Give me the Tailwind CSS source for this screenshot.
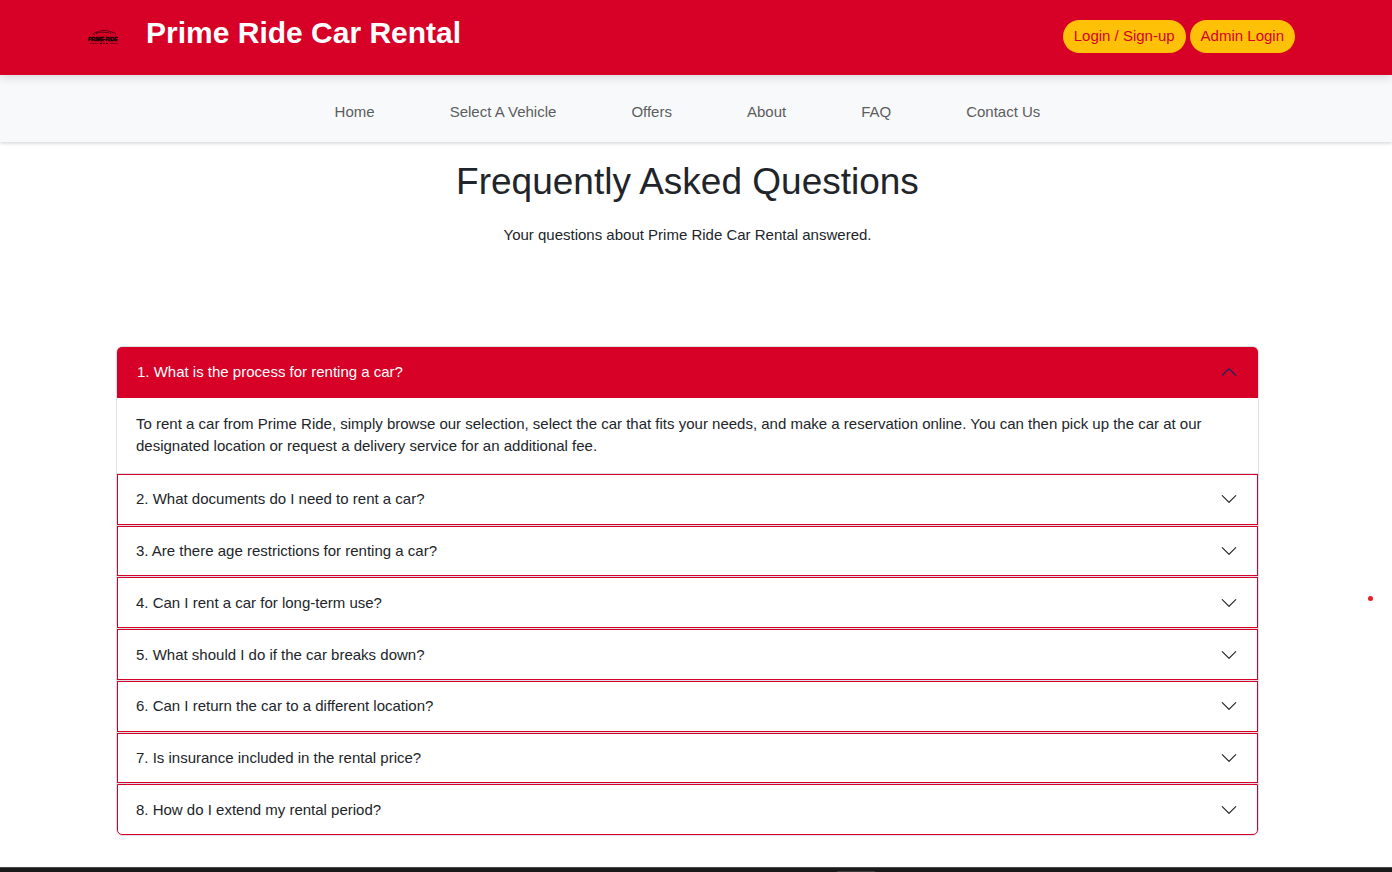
<!DOCTYPE html>
<html lang="en">
<head>
<meta charset="utf-8">
<meta name="viewport" content="width=device-width, initial-scale=1">
<title>Prime Ride Car Rental - FAQ</title>
<script src="https://cdn.jsdelivr.net/npm/@tailwindcss/browser@4"></script>
</head>
<body class="flex min-h-screen flex-col bg-white font-['Liberation_Sans',Arial,sans-serif] text-[15px] leading-[22px] text-[#212529]">
<header class="relative z-10 flex h-[75px] items-start bg-[#d70026] pr-[97px] pl-[86px] shadow-[0_2px_10px_rgba(0,0,0,0.15)]">
  <svg class="mt-[27px] h-5 w-9 shrink-0" viewBox="0 0 36 20" role="img" aria-label="Prime-Ride logo">
    <path d="M7 7C9 5 11 5.500 13 4.500C16 2.700 21 2.800 25 5C28 5.300 30 6 29.500 8M10 6.500C15 4.500 20 5 25 6.500M7 7L9 8" fill="none" stroke="#30000c" stroke-width=".7"/>
    <text x="2" y="14" font-family="Liberation Sans" font-size="5" font-weight="700" font-style="italic" fill="#000" stroke="#000" stroke-width=".3">PRIME-RIDE</text>
    <path d="M4 16.500H13M24 16.500H32" stroke="#5b0015" stroke-width=".6"/>
    <path d="M14 16.500H23" stroke="#400010" stroke-width="1" stroke-dasharray="2 1"/>
  </svg>
  <h2 class="mt-[15px] ml-6 text-[30px] leading-9 font-bold text-white">Prime Ride Car Rental</h2>
  <div class="mt-5 ml-auto flex gap-1">
    <button type="button" class="h-[33px] rounded-full bg-[#ffc107] px-[11px] pb-0.5 whitespace-nowrap text-[#d70026]">Login / Sign-up</button>
    <button type="button" class="h-[33px] rounded-full bg-[#ffc107] px-[11px] pb-0.5 whitespace-nowrap text-[#d70026]">Admin Login</button>
  </div>
</header>
<nav class="flex h-[67px] items-center justify-center gap-[75px] bg-[#f8f9fb] pt-1.5 pr-[17px] text-[#5c5d5e] shadow-[0_1px_4px_rgba(0,0,0,0.2)]">
  <a href="#">Home</a>
  <a href="#">Select A Vehicle</a>
  <a href="#">Offers</a>
  <a href="#">About</a>
  <a href="#">FAQ</a>
  <a href="#">Contact Us</a>
</nav>
<main class="flex-1 pr-[133px] pl-[116px]">
  <h1 class="pt-[17px] text-center text-[37px] leading-[46px]">Frequently Asked Questions</h1>
  <p class="mt-[19px] text-center">Your questions about Prime Ride Car Rental answered.</p>
  <section class="mt-[100px] rounded-md border border-[#dee2e6]">
    <h3><button type="button" aria-expanded="true" class="flex h-[51px] w-full items-center justify-between rounded-t-[5px] bg-[#d70026] px-5 pb-0.5 text-left text-white">1. What is the process for renting a car?
      <svg class="size-[18px] text-[#052c65]" viewBox="0 0 16 16" fill="currentColor" aria-hidden="true"><path d="M1.646 11.354a.5.5 0 0 0 .708 0L8 5.707l5.646 5.647a.5.5 0 0 0 .708-.708l-6-6a.5.5 0 0 0-.708 0l-6 6a.5.5 0 0 0 0 .708z"/></svg></button></h3>
    <p class="px-[19px] pt-[15px] pb-4">To rent a car from Prime Ride, simply browse our selection, select the car that fits your needs, and make a reservation online. You can then pick up the car at our designated location or request a delivery service for an additional fee.</p>
    <div id="faq" class="flex min-h-[362px] flex-col"></div>
  </section>
</main>
<div class="absolute top-[596px] right-[19px] size-[5px] rounded-full bg-[#ec1c24]"></div>
<footer class="flex h-[5px] items-end border-t border-[#474747] bg-[#1a1a1b] pl-[837px]"><div class="h-px w-[38px] bg-[#3c3c3c]"></div></footer>
<script>
const questions = [
  "What documents do I need to rent a car?",
  "Are there age restrictions for renting a car?",
  "Can I rent a car for long-term use?",
  "What should I do if the car breaks down?",
  "Can I return the car to a different location?",
  "Is insurance included in the rental price?",
  "How do I extend my rental period?"
];
document.getElementById("faq").innerHTML = questions.map((q, i) => `
  <h3 class="flex grow border-t border-[#dee2e6]">
    <button type="button" aria-expanded="false" class="flex w-full items-center justify-between border border-[#d70026] pr-[19px] pl-[18px] text-left ${i === questions.length - 1 ? "rounded-b-[5px]" : ""}">${i + 2}. ${q}
      <svg class="size-[18px]" viewBox="0 0 16 16" fill="currentColor" aria-hidden="true"><path d="M1.646 4.646a.5.5 0 0 1 .708 0L8 10.293l5.646-5.647a.5.5 0 0 1 .708.708l-6 6a.5.5 0 0 1-.708 0l-6-6a.5.5 0 0 1 0-.708z"/></svg>
    </button>
  </h3>`).join("");
</script>
</body>
</html>
